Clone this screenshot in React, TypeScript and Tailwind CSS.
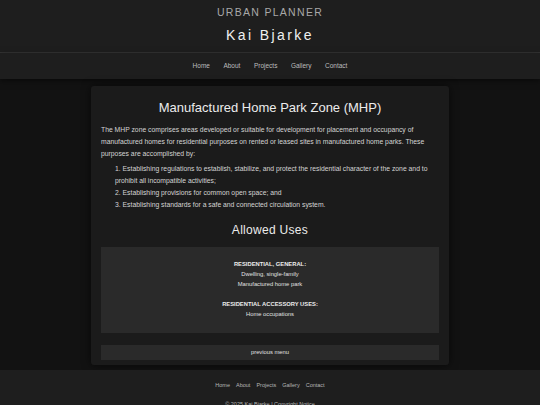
export default function App() {
  const nav = ["Home", "About", "Projects", "Gallery", "Contact"];

  return (
    <div className="min-h-screen bg-[#121212] font-['Liberation_Sans',Arial,sans-serif] text-[#dddddd]">
      {/* Header */}
      <header className="bg-[#1e1e1e]">
        <div className="flex flex-col items-center pt-[5px] h-[53px] border-b border-[#333333]">
          <div className="text-[10.5px] leading-[14px] tracking-[1.3px] text-[#a8a8a8]">URBAN PLANNER</div>
          <div className="mt-[7px] text-[14px] leading-[18px] tracking-[2.4px] text-[#f0f0f0]">Kai Bjarke</div>
        </div>
        <nav className="h-[26px] flex items-center justify-center gap-[13.5px] shadow-[0_2px_6px_rgba(0,0,0,0.5)]">
          {nav.map((n) => (
            <a key={n} className="text-[6.5px] text-[#bdbdbd]">
              {n}
            </a>
          ))}
        </nav>
      </header>

      {/* Main card */}
      <main className="pt-[7px] pb-[5px]">
        <div className="mx-auto w-[358px] bg-[#1b1b1b] rounded-[3px] shadow-[0_0_10px_rgba(0,0,0,0.6)] px-[10px] pt-[14px] pb-[5px]">
          <h1 className="text-center text-[13px] leading-[16px] text-[#ececec]">
            Manufactured Home Park Zone (MHP)
          </h1>

          <p className="mt-[8px] text-[6.8px] leading-[12px] text-[#d4d4d4]">
            The MHP zone comprises areas developed or suitable for development for placement and occupancy of
            manufactured homes for residential purposes on rented or leased sites in manufactured home parks. These
            purposes are accomplished by:
          </p>

          <div className="mt-[3px] pl-[14px] text-[6.8px] leading-[12px] text-[#d4d4d4]">
            <div>
              1. Establishing regulations to establish, stabilize, and protect the residential character of the zone and to
              prohibit all incompatible activities;
            </div>
            <div>2. Establishing provisions for common open space; and</div>
            <div>3. Establishing standards for a safe and connected circulation system.</div>
          </div>

          <h2 className="mt-[11px] text-center text-[12px] leading-[16px] tracking-[0.3px] text-[#ececec]">
            Allowed Uses
          </h2>

          <div className="mt-[9px] h-[86px] bg-[#2a2a2a] flex flex-col items-center pt-[12px] text-[5.8px] leading-[10px] text-[#e0e0e0]">
            <div className="font-bold text-[#ececec]">RESIDENTIAL, GENERAL:</div>
            <div>Dwelling, single-family</div>
            <div>Manufactured home park</div>
            <div className="mt-[10px] font-bold text-[#ececec]">RESIDENTIAL ACCESSORY USES:</div>
            <div>Home occupations</div>
          </div>

          <button className="mt-[12px] w-full h-[15px] bg-[#2a2a2a] flex items-center justify-center text-[5.8px] text-[#e0e0e0]">
            previous menu
          </button>
        </div>
      </main>

      {/* Footer */}
      <footer className="bg-[#1e1e1e] pt-[11px] pb-[4px] flex flex-col items-center">
        <div className="flex gap-[6px] text-[5.5px] leading-[8px] text-[#b5b5b5]">
          {nav.map((n) => (
            <a key={n}>{n}</a>
          ))}
        </div>
        <div className="mt-[11px] text-[5.5px] leading-[8px] text-[#b5b5b5]">© 2025 Kai Bjarke | Copyright Notice</div>
      </footer>
    </div>
  );
}
